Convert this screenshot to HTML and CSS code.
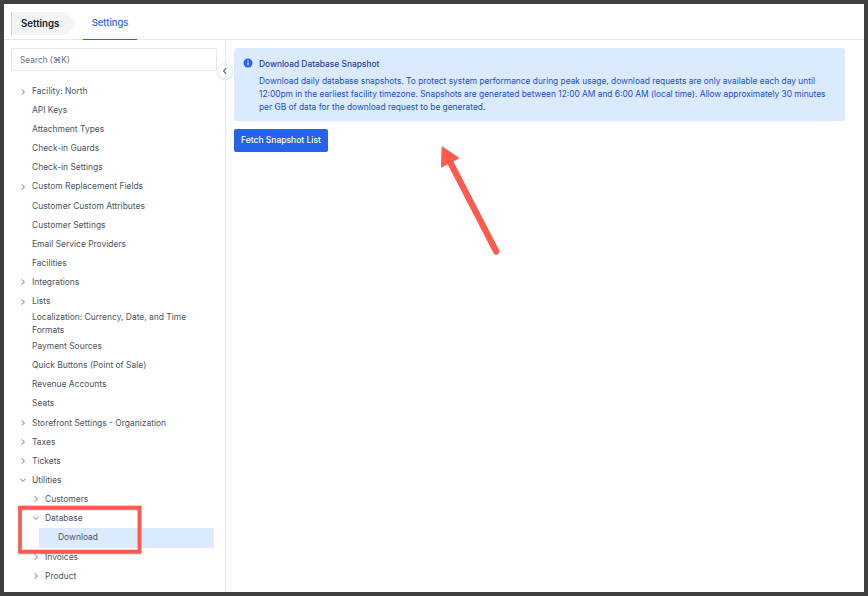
FILE: index.html
```html
<!DOCTYPE html>
<html lang="en">
<head>
<meta charset="utf-8">
<title>Settings</title>
<link rel="stylesheet" href="styles.css">
</head>
<body>
<div class="frame">
  <header class="topbar">
    <div class="crumb">Settings</div>
    <div class="tab">Settings</div>
  </header>
  <div class="main">
    <aside class="sidebar">
      <div class="search">Search (⌘K)</div>
      <button class="collapse" aria-label="Collapse">
        <svg width="8" height="8" viewBox="0 0 8 8"><path d="M5.2 1.2 2.6 4l2.6 2.8" fill="none" stroke="#4b5563" stroke-width="1.1"/></svg>
      </button>
      <ul class="tree">
        <li class="row"><svg class="chev" viewBox="0 0 8 8"><path d="M2.8 1.4 5.4 4 2.8 6.6"/></svg>Facility: North</li>
        <li class="row">API Keys</li>
        <li class="row">Attachment Types</li>
        <li class="row">Check-in Guards</li>
        <li class="row">Check-in Settings</li>
        <li class="row"><svg class="chev" viewBox="0 0 8 8"><path d="M2.8 1.4 5.4 4 2.8 6.6"/></svg>Custom Replacement Fields</li>
        <li class="row">Customer Custom Attributes</li>
        <li class="row">Customer Settings</li>
        <li class="row">Email Service Providers</li>
        <li class="row">Facilities</li>
        <li class="row"><svg class="chev" viewBox="0 0 8 8"><path d="M2.8 1.4 5.4 4 2.8 6.6"/></svg>Integrations</li>
        <li class="row"><svg class="chev" viewBox="0 0 8 8"><path d="M2.8 1.4 5.4 4 2.8 6.6"/></svg>Lists</li>
        <li class="row wrap">Localization: Currency, Date, and Time Formats</li>
        <li class="row">Payment Sources</li>
        <li class="row">Quick Buttons (Point of Sale)</li>
        <li class="row">Revenue Accounts</li>
        <li class="row">Seats</li>
        <li class="row"><svg class="chev" viewBox="0 0 8 8"><path d="M2.8 1.4 5.4 4 2.8 6.6"/></svg>Storefront Settings - Organization</li>
        <li class="row"><svg class="chev" viewBox="0 0 8 8"><path d="M2.8 1.4 5.4 4 2.8 6.6"/></svg>Taxes</li>
        <li class="row"><svg class="chev" viewBox="0 0 8 8"><path d="M2.8 1.4 5.4 4 2.8 6.6"/></svg>Tickets</li>
        <li class="row"><svg class="chev" viewBox="0 0 8 8"><path d="M1.4 2.8 4 5.4 6.6 2.8"/></svg>Utilities</li>
        <li class="row lvl2"><svg class="chev" viewBox="0 0 8 8"><path d="M2.8 1.4 5.4 4 2.8 6.6"/></svg>Customers</li>
        <li class="row lvl2"><svg class="chev" viewBox="0 0 8 8"><path d="M1.4 2.8 4 5.4 6.6 2.8"/></svg>Database</li>
        <li class="row selected">Download</li>
        <li class="row lvl2"><svg class="chev" viewBox="0 0 8 8"><path d="M2.8 1.4 5.4 4 2.8 6.6"/></svg>Invoices</li>
        <li class="row lvl2"><svg class="chev" viewBox="0 0 8 8"><path d="M2.8 1.4 5.4 4 2.8 6.6"/></svg>Product</li>
      </ul>
    </aside>
    <main class="content">
      <section class="alert">
        <svg class="info" viewBox="0 0 10 10"><circle cx="5" cy="5" r="4.5" fill="#2563eb"/><rect x="4.4" y="4.3" width="1.2" height="3" fill="#dbeafe"/><rect x="4.4" y="2.4" width="1.2" height="1.2" fill="#dbeafe"/></svg>
        <div>
          <h1 class="alert-title">Download Database Snapshot</h1>
          <p class="alert-text">Download daily database snapshots. To protect system performance during peak usage, download requests are only available each day until 12:00pm in the earliest facility timezone. Snapshots are generated between 12:00 AM and 6:00 AM (local time). Allow approximately 30 minutes per GB of data for the download request to be generated.</p>
        </div>
      </section>
      <button class="primary">Fetch Snapshot List</button>
    </main>
  </div>
  <svg class="marks" width="868" height="596" viewBox="0 0 868 596" aria-hidden="true">
    <g class="mark-shadow">
      <rect x="20" y="508.5" width="119.5" height="44"/>
      <path d="M449.5 161 496.5 252"/>
      <path class="head" d="M441.7 147 459.5 159 441 168.5Z"/>
    </g>
    <g class="mark">
      <rect x="20" y="507.5" width="119.5" height="44"/>
      <path d="M449 160 496 251"/>
      <path class="head" d="M441.7 146 459.5 158 441 167.5Z"/>
    </g>
  </svg>
</div>
</body>
</html>
```
FILE: styles.css
```css
* { box-sizing: border-box; }
html, body { margin: 0; height: 100%; }
body { background: #404040; font-family: Inter, "Liberation Sans", sans-serif; overflow: hidden; }
.frame { width: 868px; height: 596px; padding: 4px; position: relative; }
.topbar { height: 36px; background: #fff; border-bottom: 1px solid #e5e7eb; display: flex; padding-left: 7px; }
.crumb {
  margin-top: 8px; width: 66px; height: 23px; background: #f3f4f6; border-left: 1px solid #d1d5db;
  clip-path: polygon(0 0, 55px 0, 66px 50%, 55px 100%, 0 100%);
  font-size: 9.7px; font-weight: 600; line-height: 23px; padding-left: 9px; color: #111827;
}
.tab {
  margin-left: 6px; width: 54px; height: 36px; border-bottom: 1px solid #2563eb; margin-bottom: -1px;
  text-align: center; font-size: 9.4px; font-weight: 500; line-height: 37px; color: #2563eb;
}
.main { display: flex; height: 552px; background: #fff; }
.sidebar { width: 222px; border-right: 1px solid #e5e7eb; padding: 8px 0 0 7px; position: relative; overflow: visible; }
.search {
  width: 206px; height: 23px; border: 1px solid #e5e7eb; border-radius: 2px; background: #fff;
  font-size: 8.3px; line-height: 23px; padding-left: 8px; color: #6b7280;
}
.collapse {
  position: absolute; right: -8px; top: 23px; width: 16px; height: 16px; padding: 0; border: 1px solid #f0f1f3; border-radius: 50%;
  background: #fff; box-shadow: 0 1px 2px rgba(0,0,0,.12); display: flex; align-items: center; justify-content: center; z-index: 1;
}
.tree { list-style: none; margin: 11px 0 0; padding: 0; }
.row { height: 19.1px; position: relative; padding-left: 21px; font-size: 8.45px; line-height: 19.1px; color: #4b5563; white-space: nowrap; }
.row.wrap { height: 26px; white-space: normal; width: 180px; line-height: 13px; }
.row.lvl2 { padding-left: 34px; }
.row.selected { margin: 0 11px 0 28px; padding-left: 19px; background: #dbeafe; height: 19.5px; line-height: 19.5px; }
.chev { position: absolute; left: 8px; top: 5.5px; width: 8px; height: 8px; fill: none; stroke: #6b7280; stroke-width: 1; }
.lvl2 .chev { left: 21px; }
.content { flex: 1; padding: 8px 19px 0 8px; }
.alert { background: #dbeafe; border-radius: 3px; height: 73px; display: flex; gap: 6px; padding: 10px 10px 0 9px; }
.info { width: 10px; height: 10px; flex: none; }
.alert-title { margin: 0; font-size: 8.4px; font-weight: 500; line-height: 13px; color: #1e40af; }
.alert-text { margin: 4px 0 0; font-size: 8.37px; line-height: 13px; color: #1d4ed8; }
.primary {
  display: block; margin-top: 8px; width: 94px; height: 23px; padding: 0; border: 0; border-radius: 2px; background: #2563eb;
  color: #fff; font: 500 8.5px/23px Inter, "Liberation Sans", sans-serif;
}
.marks { position: absolute; left: 0; top: 0; pointer-events: none; }
.marks rect { fill: none; stroke-width: 3.6; }
.marks path { fill: none; stroke-width: 6; stroke-linecap: round; }
.marks .head { stroke: none; }
.mark-shadow rect, .mark-shadow path { stroke: rgba(60,60,60,.45); }
.mark-shadow .head { fill: rgba(60,60,60,.2); }
.mark rect, .mark path { stroke: #ff5a4d; }
.mark .head { fill: #ff5a4d; }
```
